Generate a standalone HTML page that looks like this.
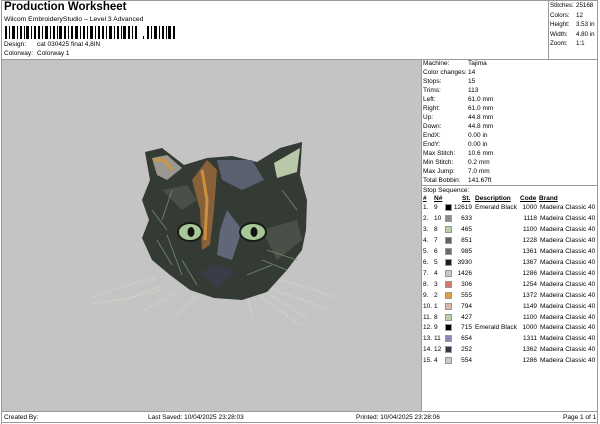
<!DOCTYPE html>
<html><head><style>
*{margin:0;padding:0;box-sizing:border-box}
body{width:600px;height:424px;background:#fff;font-family:"Liberation Sans",Arial,sans-serif;font-size:6.5px;color:#000;position:relative;overflow:hidden}
.a{position:absolute;white-space:nowrap;line-height:9px}
.l{position:absolute;background:#9a9a9a}
</style></head><body>
<div class="l" style="left:1px;top:0;width:1px;height:424px"></div>
<div class="l" style="left:597px;top:0;width:1px;height:424px"></div>
<div class="l" style="left:1px;top:0;width:597px;height:1px"></div>
<div class="l" style="left:1px;top:59px;width:597px;height:1px"></div>
<div class="l" style="left:548px;top:0;width:1px;height:59px"></div>
<div class="l" style="left:421px;top:60px;width:1px;height:351px"></div>
<div class="l" style="left:421px;top:185px;width:177px;height:1px"></div>
<div class="l" style="left:1px;top:411px;width:597px;height:1px"></div>
<div class="l" style="left:1px;top:422px;width:597px;height:1px"></div>
<div style="position:absolute;left:2px;top:60px;width:419px;height:351px;background:#c4c4c4"></div>

<div class="a" style="left:4px;top:1px;font-size:11.5px;font-weight:bold;line-height:13px">Production Worksheet</div>
<div class="a" style="left:4px;top:15px;font-size:6.8px">Wilcom EmbroideryStudio – Level 3 Advanced</div>
<svg style="position:absolute;left:5px;top:26px" width="172" height="14">
<g fill="#000">
<rect x="0" y="0" width="2" height="13"/><rect x="4" y="0" width="1" height="13"/><rect x="7" y="0" width="3" height="13"/><rect x="12" y="0" width="1" height="13"/><rect x="15" y="0" width="2" height="13"/><rect x="19" y="0" width="1" height="13"/><rect x="21" y="0" width="3" height="13"/><rect x="26" y="0" width="1" height="13"/><rect x="29" y="0" width="2" height="13"/><rect x="33" y="0" width="2" height="13"/><rect x="37" y="0" width="1" height="13"/><rect x="40" y="0" width="3" height="13"/><rect x="45" y="0" width="1" height="13"/><rect x="48" y="0" width="2" height="13"/><rect x="52" y="0" width="1" height="13"/><rect x="54" y="0" width="3" height="13"/><rect x="59" y="0" width="2" height="13"/><rect x="63" y="0" width="1" height="13"/><rect x="66" y="0" width="2" height="13"/><rect x="70" y="0" width="3" height="13"/><rect x="75" y="0" width="1" height="13"/><rect x="78" y="0" width="2" height="13"/><rect x="82" y="0" width="1" height="13"/><rect x="85" y="0" width="3" height="13"/><rect x="90" y="0" width="1" height="13"/><rect x="93" y="0" width="2" height="13"/><rect x="97" y="0" width="2" height="13"/><rect x="101" y="0" width="1" height="13"/><rect x="104" y="0" width="3" height="13"/><rect x="109" y="0" width="1" height="13"/><rect x="112" y="0" width="2" height="13"/><rect x="116" y="0" width="1" height="13"/><rect x="118" y="0" width="3" height="13"/><rect x="123" y="0" width="2" height="13"/><rect x="127" y="0" width="1" height="13"/><rect x="130" y="0" width="2" height="13"/><rect x="138" y="10" width="1" height="3"/><rect x="142" y="0" width="2" height="13"/><rect x="146" y="0" width="1" height="13"/><rect x="149" y="0" width="3" height="13"/><rect x="154" y="0" width="1" height="13"/><rect x="157" y="0" width="2" height="13"/><rect x="161" y="0" width="1" height="13"/><rect x="163" y="0" width="3" height="13"/><rect x="168" y="0" width="2" height="13"/>
</g></svg>
<div class="a" style="left:4px;top:40px">Design:</div><div class="a" style="left:37px;top:40px">cat 030425 final 4,8IN</div>
<div class="a" style="left:4px;top:49px">Colorway:</div><div class="a" style="left:37px;top:49px">Colorway 1</div>

<div style="font-size:6.2px">
<div class="a" style="left:550px;top:1px">Stitches:</div><div class="a" style="left:576px;top:1px">25168</div>
<div class="a" style="left:550px;top:11px">Colors:</div><div class="a" style="left:576px;top:11px">12</div>
<div class="a" style="left:550px;top:20px">Height:</div><div class="a" style="left:576px;top:20px">3.53 in</div>
<div class="a" style="left:550px;top:30px">Width:</div><div class="a" style="left:576px;top:30px">4.80 in</div>
<div class="a" style="left:550px;top:39px">Zoom:</div><div class="a" style="left:576px;top:39px">1:1</div>
</div>

<div style="position:absolute;left:423px;top:59px;line-height:9px">
Machine:<br>Color changes:<br>Stops:<br>Trims:<br>Left:<br>Right:<br>Up:<br>Down:<br>EndX:<br>EndY:<br>Max Stitch:<br>Min Stitch:<br>Max Jump:<br>Total Bobbin:</div>
<div style="position:absolute;left:468px;top:59px;line-height:9px">
Tajima<br>14<br>15<br>113<br>61.0 mm<br>61.0 mm<br>44.8 mm<br>44.8 mm<br>0.00 in<br>0.00 in<br>10.6 mm<br>0.2 mm<br>7.0 mm<br>141.67ft</div>
<div class="a" style="left:423px;top:186px">Stop Sequence:</div>
<div class="a" style="left:423px;top:194px;font-weight:bold;text-decoration:underline">#</div>
<div class="a" style="left:434px;top:194px;font-weight:bold;text-decoration:underline">N#</div>
<div class="a" style="left:462px;top:194px;font-weight:bold;text-decoration:underline">St.</div>
<div class="a" style="left:475px;top:194px;font-weight:bold;text-decoration:underline">Description</div>
<div class="a" style="left:520px;top:194px;font-weight:bold;text-decoration:underline">Code</div>
<div class="a" style="left:539px;top:194px;font-weight:bold;text-decoration:underline">Brand</div>
<div id="rows"></div>
<script>
var d=[["1.","9","#000","12619","Emerald Black","1000"],["2.","10","#8a8c90","633","","1118"],["3.","8","#b8d0a8","465","","1100"],["4.","7","#6a5e58","851","","1228"],["5.","6","#6a6a6e","985","","1361"],["6.","5","#1c1c28","3930","","1367"],["7.","4","#c8c8c8","1426","","1286"],["8.","3","#d87868","306","","1254"],["9.","2","#e0a040","555","","1372"],["10.","1","#d8b8a8","794","","1149"],["11.","8","#b8d0a8","427","","1100"],["12.","9","#000","715","Emerald Black","1000"],["13.","11","#8888b8","654","","1311"],["14.","12","#383848","252","","1362"],["15.","4","#c8c8c8","554","","1286"]];
var h="";d.forEach(function(r,i){var y=203+i*10.95;
h+='<div class="a" style="left:423px;top:'+y+'px">'+r[0]+'</div><div class="a" style="left:434px;top:'+y+'px">'+r[1]+'</div><div style="position:absolute;left:445px;top:'+(y+1)+'px;width:7px;height:7px;background:'+r[2]+';border:1px solid #999"></div><div class="a" style="left:452px;width:20px;text-align:right;top:'+y+'px">'+r[3]+'</div><div class="a" style="left:475px;top:'+y+'px">'+r[4]+'</div><div class="a" style="left:520px;width:17px;text-align:right;top:'+y+'px">'+r[5]+'</div><div class="a" style="left:540px;top:'+y+'px">Madeira Classic 40</div>';});
document.getElementById("rows").innerHTML=h;
</script>

<svg style="position:absolute;left:2px;top:60px" width="419" height="351">
<g stroke="#ddd8c8" stroke-width="1.3" stroke-dasharray="1 1.5" fill="none">
<path d="M88 238 Q120 225 155 218"/><path d="M90 243 Q125 240 160 230"/><path d="M120 242 Q140 232 160 226"/><path d="M140 252 Q160 240 175 232"/><path d="M172 258 Q185 245 195 235"/>
<path d="M335 238 Q300 225 270 218"/><path d="M330 250 Q300 240 268 228"/><path d="M305 258 Q285 245 262 232"/><path d="M298 265 Q275 248 258 236"/><path d="M250 257 Q248 245 245 236"/>
</g>
<path d="M143 92 L160 88 L182 105 L205 98 L230 96 L255 102 L278 88 L300 82 L298 115 L305 140 L304 170 L300 190 L285 210 L265 232 L240 240 L212 238 L188 230 L168 215 L150 200 L140 178 L147 160 L140 140 L148 120 Z" fill="#343a34"/>
<path d="M150 98 L165 95 L180 108 L165 120 L155 115 Z" fill="#9a9890"/>
<path d="M152 100 L162 100 L170 110" stroke="#c89840" stroke-width="3" fill="none"/>
<path d="M298 88 L295 112 L275 118 L272 103 Z" fill="#b8c8a8"/>
<path d="M205 100 L215 110 L212 150 L208 185 L200 190 L198 150 L190 120 Z" fill="#8a6038"/>
<path d="M200 110 L205 140 L203 180" stroke="#c89040" stroke-width="3" fill="none"/>
<path d="M215 100 L250 100 L262 120 L240 130 L220 120 Z" fill="#5a6070"/>
<path d="M225 150 L240 170 L230 200 L215 195 L218 170 Z" fill="#606878"/>
<path d="M260 170 L295 160 L300 180 L275 200 Z" fill="#4a5048"/>
<path d="M160 130 L185 125 L195 140 L180 150 Z" fill="#485048"/>
<ellipse cx="188" cy="172" rx="12" ry="9" fill="#a8c898" stroke="#181c18" stroke-width="2"/>
<ellipse cx="189" cy="172" rx="3.5" ry="5" fill="#101410"/>
<ellipse cx="251" cy="172" rx="13" ry="9" fill="#a8c898" stroke="#181c18" stroke-width="2"/>
<ellipse cx="252" cy="172" rx="3.5" ry="5" fill="#101410"/>
<path d="M198 212 L215 205 L232 212 L215 228 Z" fill="#3a3c48"/>
<g stroke="#7a8a70" stroke-width="0.8"><path d="M155 180 L170 205"/><path d="M165 175 L180 215"/><path d="M260 200 L285 210"/><path d="M265 190 L295 200"/><path d="M170 130 L160 160"/><path d="M180 200 L195 225"/><path d="M245 215 L270 205"/><path d="M150 150 L165 170"/><path d="M280 130 L295 150"/></g>
</svg>

<div class="a" style="left:4px;top:413px">Created By:</div>
<div class="a" style="left:148px;top:413px">Last Saved: 10/04/2025 23:28:03</div>
<div class="a" style="left:356px;top:413px">Printed: 10/04/2025 23:28:06</div>
<div class="a" style="left:563px;top:413px">Page 1 of 1</div>
</body></html>
